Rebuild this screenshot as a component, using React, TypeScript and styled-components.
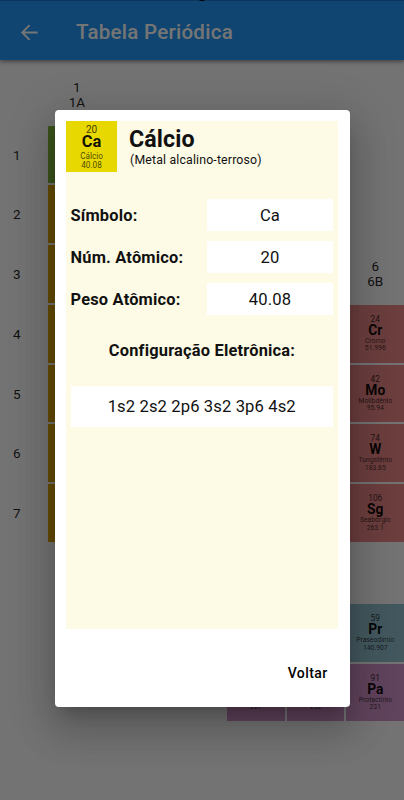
import React from "react";
import styled, { createGlobalStyle } from "styled-components";

const Global = createGlobalStyle`
  * { box-sizing: border-box; }
  body { margin: 0; background: #fafafa; font-family: Roboto, sans-serif; color: rgba(0,0,0,.87); }
`;

const Screen = styled.div`
  position: relative;
  width: 404px;
  height: 800px;
  overflow: hidden;
  background: #fafafa;
`;

const AppBar = styled.header`
  display: flex;
  align-items: center;
  height: 60px;
  padding: 3px 0 0 18px;
  gap: 35px;
  background: #2196f3;
  color: #fff;
  border-top: 1px solid #1976d2;
  box-shadow: 0 2px 4px rgba(0, 0, 0, 0.4);
`;

const AppTitle = styled.h1`
  margin: 0;
  font-size: 20.5px;
  line-height: 24px;
  font-weight: 500;
  letter-spacing: 0.27px;
`;

const Camera = styled.i`
  position: absolute;
  top: -11px;
  left: 196px;
  width: 12px;
  height: 12px;
  border-radius: 50%;
  background: #000;
`;

const Table = styled.main`
  display: grid;
  grid-template-columns: 48px repeat(6, 59.7px);
  grid-template-rows: repeat(7, 59.75px) 60.5px repeat(2, 59.5px);
  padding-top: 65.7px;
`;

const Place = styled.div<{ $row: number; $col: number }>`
  grid-row: ${(p) => p.$row};
  grid-column: ${(p) => p.$col + 1};
  display: flex;
  padding: 0 2px 2px 0;
`;

const PeriodLabel = styled(Place)`
  align-items: center;
  padding-left: 13px;
  font-size: 13.5px;
`;

const GroupLabel = styled(Place)<{ $lift: number }>`
  flex-direction: column;
  align-items: center;
  justify-content: ${(p) => (p.$lift ? "flex-start" : "flex-end")};
  margin-top: ${(p) => -p.$lift}px;
  padding-bottom: 15px;
  font-size: 13.5px;
  line-height: 15.5px;
`;

const Tile = styled.div<{ $color: string }>`
  flex: 1;
  display: flex;
  flex-direction: column;
  align-items: center;
  padding-top: 10px;
  background: ${(p) => p.$color};
  white-space: nowrap;
`;

const TileNumber = styled.span<{ $large?: boolean }>`
  font-size: ${(p) => (p.$large ? 10 : 8.3)}px;
  line-height: ${(p) => (p.$large ? 11 : 9)}px;
  color: rgba(0, 0, 0, 0.75);
`;
const TileSymbol = styled.b<{ $large?: boolean }>`
  font-size: ${(p) => (p.$large ? 16.5 : 13.8)}px;
  line-height: ${(p) => (p.$large ? 14 : 12)}px;
  color: rgba(0, 0, 0, 0.92);
`;
const TileDetail = styled.span<{ $large?: boolean }>`
  font-size: ${(p) => (p.$large ? 8.2 : 6.8)}px;
  line-height: ${(p) => (p.$large ? 9.3 : 7.5)}px;
  color: rgba(0, 0, 0, 0.7);
  &:nth-of-type(2) { margin-top: ${(p) => (p.$large ? 3 : 2)}px; }
`;

const Scrim = styled.div`
  position: absolute;
  inset: 0;
  padding: 110px 55px 93px 55px;
  background: rgba(0, 0, 0, 0.54);
`;

const Dialog = styled.section`
  display: flex;
  flex-direction: column;
  width: 294.5px;
  height: 597px;
  padding: 11px 11.5px 0 11px;
  background: #fff;
  border-radius: 4px;
  color: #111;
  box-shadow: 0 11px 15px -7px rgba(0, 0, 0, 0.2), 0 24px 38px 3px rgba(0, 0, 0, 0.14),
    0 9px 46px 8px rgba(0, 0, 0, 0.12);
`;

const Sheet = styled.div`
  height: 508px;
  background: #fdfae5;
`;

const Heading = styled.div`
  display: flex;
  gap: 12px;
  height: 78px;
`;

const Badge = styled(Tile)`
  flex: none;
  width: 51px;
  height: 51px;
  padding-top: 3px;
`;

const Name = styled.h2`
  margin: 4px 0 0;
  font-size: 23.2px;
  line-height: 28px;
  font-weight: 700;
  letter-spacing: 0.1px;
`;

const Family = styled.div`
  padding-left: 1px;
  font-size: 12.3px;
  line-height: 14px;
  letter-spacing: 0.17px;
`;

const Field = styled.div`
  display: grid;
  grid-template-columns: 136.5px 126px;
  align-items: center;
  height: 32px;
  margin: 0 4px 10px 4.5px;
`;

const Label = styled.b`
  font-size: 16.4px;
  font-weight: 700;
  letter-spacing: 0.2px;
`;

const Value = styled.div<{ $wide?: boolean }>`
  display: flex;
  align-items: center;
  justify-content: center;
  height: ${(p) => (p.$wide ? 41 : 32)}px;
  margin: ${(p) => (p.$wide ? "0 5px 0 4.5px" : 0)};
  background: #fff;
  font-size: 16.6px;
  letter-spacing: 0.12px;
`;

const Subheading = styled(Label)`
  display: block;
  margin: 25px 0 24px;
  line-height: 22px;
  text-align: center;
`;

const Actions = styled.footer`
  display: flex;
  justify-content: flex-end;
  padding: 34px 10.5px 0 0;
`;

const TextButton = styled.button`
  padding: 0;
  border: 0;
  background: none;
  color: #000;
  font: 500 14px/20px Roboto, sans-serif;
  letter-spacing: 0.4px;
`;

type ElementInfo = {
  row: number;
  col: number;
  color: string;
  number?: number;
  symbol?: string;
  name?: string;
  weight?: string;
};

const RED = "#ec8888";
const BLUE = "#93bfcc";
const PURPLE = "#d293c8";

const elements: ElementInfo[] = [
  { row: 1, col: 1, color: "#80b83c" },
  ...[2, 3, 4, 5, 6, 7].map((row) => ({ row, col: 1, color: "#dca400" })),
  { row: 4, col: 6, color: RED, number: 24, symbol: "Cr", name: "Cromo", weight: "51.996" },
  { row: 5, col: 6, color: RED, number: 42, symbol: "Mo", name: "Molibdênio", weight: "95.94" },
  { row: 6, col: 6, color: RED, number: 74, symbol: "W", name: "Tungstênio", weight: "183.85" },
  { row: 7, col: 6, color: RED, number: 106, symbol: "Sg", name: "Seabórgio", weight: "263.1" },
  { row: 9, col: 6, color: BLUE, number: 59, symbol: "Pr", name: "Praseodímio", weight: "140.907" },
  { row: 10, col: 4, color: PURPLE, number: 89, symbol: "Ac", name: "Actínio", weight: "227" },
  { row: 10, col: 5, color: PURPLE, number: 90, symbol: "Th", name: "Tório", weight: "232" },
  { row: 10, col: 6, color: PURPLE, number: 91, symbol: "Pa", name: "Protactínio", weight: "231" },
];

function TileText({ e, large }: { e: Omit<ElementInfo, "row" | "col" | "color">; large?: boolean }) {
  if (!e.symbol) return null;
  return (
    <>
      <TileNumber $large={large}>{e.number}</TileNumber>
      <TileSymbol $large={large}>{e.symbol}</TileSymbol>
      <TileDetail $large={large}>{e.name}</TileDetail>
      <TileDetail $large={large}>{e.weight}</TileDetail>
    </>
  );
}

const fields = [
  ["Símbolo:", "Ca"],
  ["Núm. Atômico:", "20"],
  ["Peso Atômico:", "40.08"],
];

export default function App() {
  return (
    <Screen>
      <Global />
      <AppBar>
        <svg width="23" height="23" viewBox="0 0 24 24" fill="currentColor">
          <path d="M20.5 11H6.8l6-6-1.4-1.4L3 12l8.4 8.4 1.4-1.4-6-6h13.7z" />
        </svg>
        <AppTitle>Tabela Periódica</AppTitle>
      </AppBar>
      <Camera />
      <Table>
        {[1, 2, 3, 4, 5, 6, 7].map((n) => (
          <PeriodLabel key={n} $row={n} $col={0}>{n}</PeriodLabel>
        ))}
        <GroupLabel $row={1} $col={1} $lift={46}>
          <span>1</span>
          <span>1A</span>
        </GroupLabel>
        <GroupLabel $row={3} $col={6} $lift={0}>
          <span>6</span>
          <span>6B</span>
        </GroupLabel>
        {elements.map((e) => (
          <Place key={`${e.row}-${e.col}`} $row={e.row} $col={e.col}>
            <Tile $color={e.color}>
              <TileText e={e} />
            </Tile>
          </Place>
        ))}
      </Table>
      <Scrim>
        <Dialog role="dialog">
          <Sheet>
            <Heading>
              <Badge $color="#e6d800">
                <TileText large e={{ number: 20, symbol: "Ca", name: "Cálcio", weight: "40.08" }} />
              </Badge>
              <div>
                <Name>Cálcio</Name>
                <Family>(Metal alcalino-terroso)</Family>
              </div>
            </Heading>
            {fields.map(([label, value]) => (
              <Field key={label}>
                <Label>{label}</Label>
                <Value>{value}</Value>
              </Field>
            ))}
            <Subheading>Configuração Eletrônica:</Subheading>
            <Value $wide>1s2 2s2 2p6 3s2 3p6 4s2</Value>
          </Sheet>
          <Actions>
            <TextButton>Voltar</TextButton>
          </Actions>
        </Dialog>
      </Scrim>
    </Screen>
  );
}
